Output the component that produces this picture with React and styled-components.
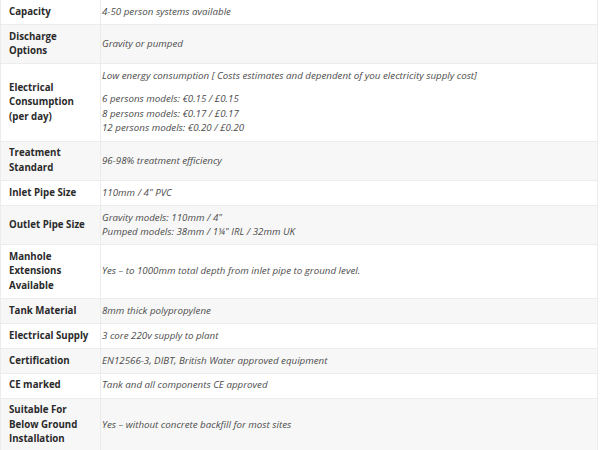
import React from 'react';
import styled, { createGlobalStyle } from 'styled-components';

const GlobalStyle = createGlobalStyle`
    body {
        margin: 0;
        background: #fff;
        font-family: "Open Sans", "Liberation Sans", sans-serif;
    }
`;

const SpecTable = styled.table`
    width: 598px;
    table-layout: fixed;
    border-collapse: collapse;
    border: 1px solid #ececec;
    border-top: none;
`;

const Row = styled.tr`
    background-color: ${props => props.shaded ? '#f7f7f7' : '#fff'};
    border-bottom: 1px solid #ececec;
`;

const Label = styled.th`
    width: 83px;
    padding: 4.7px 8px 4.7px 8px;
    text-align: left;
    vertical-align: middle;
    font-size: 9.7px;
    line-height: 14.5px;
    font-weight: 700;
    color: #2a2a2a;
    border-right: 1px solid #ececec;
`;

const Value = styled.td`
    padding: 4.7px 4px 4.7px 1px;
    vertical-align: middle;
    font-size: 9.75px;
    line-height: 14.5px;
    font-style: italic;
    color: #4d4d4d;
`;

const Para = styled.p`
    margin: 0 0 9px;
    &:last-child { margin-bottom: 0; }
`;

const specs = [
    { label: 'Capacity', value: ['4-50 person systems available'] },
    { label: 'Discharge Options', value: ['Gravity or pumped'] },
    {
        label: 'Electrical Consumption (per day)',
        value: [
            'Low energy consumption [ Costs estimates and dependent of you electricity supply cost]',
            '6 persons models: €0.15 / £0.15\n8 persons models: €0.17 / £0.17\n12 persons models: €0.20 / £0.20',
        ],
    },
    { label: 'Treatment Standard', value: ['96-98% treatment efficiency'] },
    { label: 'Inlet Pipe Size', value: ['110mm / 4" PVC'] },
    { label: 'Outlet Pipe Size', value: ['Gravity models: 110mm / 4"\nPumped models: 38mm / 1¼" IRL / 32mm UK'] },
    { label: 'Manhole Extensions Available', value: ['Yes – to 1000mm total depth from inlet pipe to ground level.'] },
    { label: 'Tank Material', value: ['8mm thick polypropylene'] },
    { label: 'Electrical Supply', value: ['3 core 220v supply to plant'] },
    { label: 'Certification', value: ['EN12566-3, DIBT, British Water approved equipment'] },
    { label: 'CE marked', value: ['Tank and all components CE approved'] },
    { label: 'Suitable For Below Ground Installation', value: ['Yes – without concrete backfill for most sites'] },
];

const Lines = ({ text }) => text.split('\n').map((line, i) =>
    <React.Fragment key={i}>{i > 0 && <br/>}{line}</React.Fragment>
);

export default function App() {
    return <>
        <GlobalStyle/>
        <SpecTable>
            <tbody>
                {specs.map((spec, i) =>
                    <Row key={spec.label} shaded={i % 2 === 1}>
                        <Label>{spec.label}</Label>
                        <Value>
                            {spec.value.length > 1
                                ? spec.value.map((p, j) => <Para key={j}><Lines text={p}/></Para>)
                                : <Lines text={spec.value[0]}/>}
                        </Value>
                    </Row>
                )}
            </tbody>
        </SpecTable>
    </>;
}
